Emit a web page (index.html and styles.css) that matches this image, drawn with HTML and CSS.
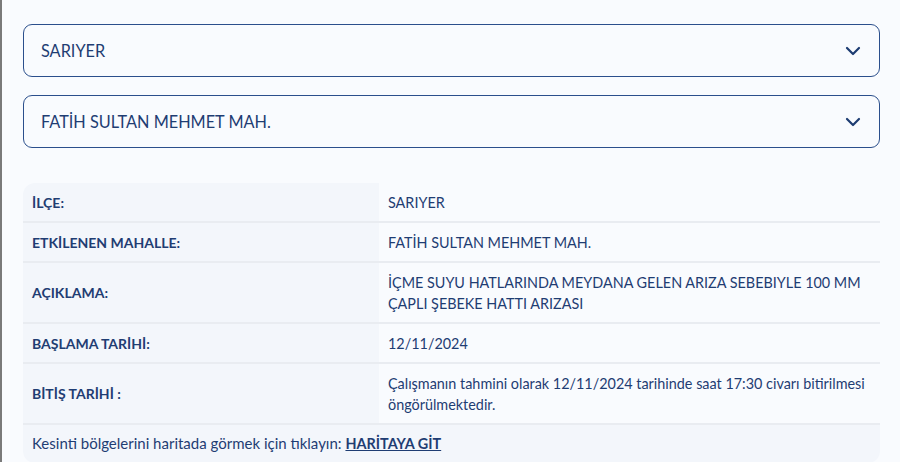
FILE: index.html
```html
<!DOCTYPE html>
<html lang="tr">
<head>
<meta charset="utf-8">
<link rel="stylesheet" href="styles.css">
</head>
<body>
<div class="page">
  <div class="select">
    <span class="select-text">SARIYER</span>
    <svg class="chev" width="16" height="10" viewBox="0 0 16 10"><path d="M2 2 L8 8 L14 2" fill="none" stroke="#1d3c72" stroke-width="2.2" stroke-linecap="round" stroke-linejoin="round"/></svg>
  </div>
  <div class="select">
    <span class="select-text">FATİH SULTAN MEHMET MAH.</span>
    <svg class="chev" width="16" height="10" viewBox="0 0 16 10"><path d="M2 2 L8 8 L14 2" fill="none" stroke="#1d3c72" stroke-width="2.2" stroke-linecap="round" stroke-linejoin="round"/></svg>
  </div>
  <table class="info">
    <tr><th>İLÇE:</th><td>SARIYER</td></tr>
    <tr><th>ETKİLENEN MAHALLE:</th><td>FATİH SULTAN MEHMET MAH.</td></tr>
    <tr><th>AÇIKLAMA:</th><td>İÇME SUYU HATLARINDA MEYDANA GELEN ARIZA SEBEBIYLE 100 MM ÇAPLI ŞEBEKE HATTI ARIZASI</td></tr>
    <tr><th>BAŞLAMA TARİHİ:</th><td>12/11/2024</td></tr>
    <tr><th>BİTİŞ TARİHİ :</th><td>Çalışmanın tahmini olarak 12/11/2024 tarihinde saat 17:30 civarı bitirilmesi öngörülmektedir.</td></tr>
    <tr><td class="map" colspan="2">Kesinti bölgelerini haritada görmek için tıklayın: <a href="#">HARİTAYA GİT</a></td></tr>
  </table>
</div>
</body>
</html>
```
FILE: styles.css
```css
html, body {
  margin: 0;
  padding: 0;
  height: 100%;
}
body {
  background: #f9fbfe;
  font-family: "Lato", "Noto Sans", sans-serif;
  color: #1f3d73;
  border-left: 2px solid #7a7a7a;
  box-sizing: border-box;
  overflow: hidden;
}
.page {
  padding: 24px 20px 0 21px;
  display: flex;
  flex-direction: column;
  gap: 18px;
}
.select {
  height: 53px;
  box-sizing: border-box;
  border: 1.3px solid #2b4f8c;
  border-radius: 9px;
  display: flex;
  align-items: center;
  justify-content: space-between;
  padding: 0 18px 0 17px;
  font-size: 16.3px;
  background: #f9fbfe;
}
.chev {
  display: block;
}
.info {
  margin-top: 17px;
  width: 100%;
  border-collapse: separate;
  border-spacing: 0;
  font-size: 14.4px;
  line-height: 21px;
  border-radius: 12px;
  overflow: hidden;
}
.info th, .info td {
  text-align: left;
  vertical-align: middle;
  padding: 8.5px 9px;
  border-bottom: 2px solid #e9ecf1;
}
.info th {
  width: 338px;
  background: #f3f6fb;
  font-weight: 700;
  font-size: 14px;
}
.info td {
  background: #f9fbfe;
  font-weight: 400;
  padding-right: 5px;
}
.info tr:last-child td {
  border-bottom: none;
}
.info td.map {
  background: #f3f6fb;
  font-size: 15px;
  padding-top: 8px;
  padding-bottom: 9px;
}
.map a {
  color: #1f3d73;
  font-weight: 700;
  font-size: 14.4px;
  text-decoration: underline;
}
```
